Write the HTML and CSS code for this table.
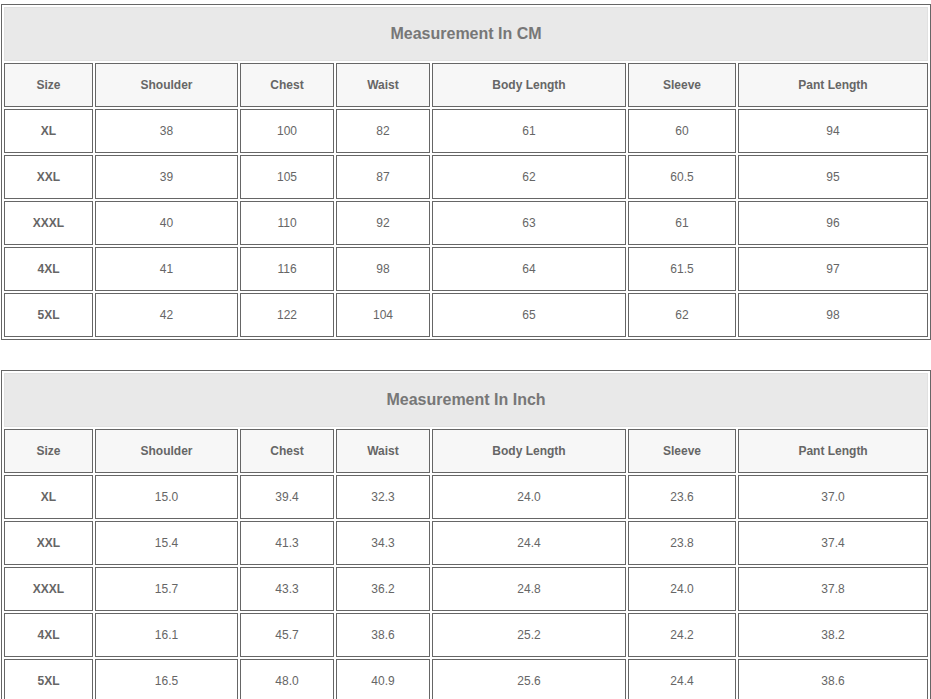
FILE: index.html
```html
<!DOCTYPE html>
<html>
<head>
<meta charset="utf-8">
<link rel="stylesheet" href="styles.css">
</head>
<body>
<div class="page">
<table class="size-table">
  <colgroup><col class="c1"><col class="c2"><col class="c3"><col class="c4"><col class="c5"><col class="c6"><col class="c7"></colgroup>
  <tr><th class="title" colspan="7">Measurement In CM</th></tr>
  <tr class="head">
    <th>Size</th><th>Shoulder</th><th>Chest</th><th>Waist</th><th>Body Length</th><th>Sleeve</th><th>Pant Length</th>
  </tr>
  <tr><td class="sz">XL</td><td>38</td><td>100</td><td>82</td><td>61</td><td>60</td><td>94</td></tr>
  <tr><td class="sz">XXL</td><td>39</td><td>105</td><td>87</td><td>62</td><td>60.5</td><td>95</td></tr>
  <tr><td class="sz">XXXL</td><td>40</td><td>110</td><td>92</td><td>63</td><td>61</td><td>96</td></tr>
  <tr><td class="sz">4XL</td><td>41</td><td>116</td><td>98</td><td>64</td><td>61.5</td><td>97</td></tr>
  <tr><td class="sz">5XL</td><td>42</td><td>122</td><td>104</td><td>65</td><td>62</td><td>98</td></tr>
</table>
<table class="size-table">
  <colgroup><col class="c1"><col class="c2"><col class="c3"><col class="c4"><col class="c5"><col class="c6"><col class="c7"></colgroup>
  <tr><th class="title" colspan="7">Measurement In Inch</th></tr>
  <tr class="head">
    <th>Size</th><th>Shoulder</th><th>Chest</th><th>Waist</th><th>Body Length</th><th>Sleeve</th><th>Pant Length</th>
  </tr>
  <tr><td class="sz">XL</td><td>15.0</td><td>39.4</td><td>32.3</td><td>24.0</td><td>23.6</td><td>37.0</td></tr>
  <tr><td class="sz">XXL</td><td>15.4</td><td>41.3</td><td>34.3</td><td>24.4</td><td>23.8</td><td>37.4</td></tr>
  <tr><td class="sz">XXXL</td><td>15.7</td><td>43.3</td><td>36.2</td><td>24.8</td><td>24.0</td><td>37.8</td></tr>
  <tr><td class="sz">4XL</td><td>16.1</td><td>45.7</td><td>38.6</td><td>25.2</td><td>24.2</td><td>38.2</td></tr>
  <tr><td class="sz">5XL</td><td>16.5</td><td>48.0</td><td>40.9</td><td>25.6</td><td>24.4</td><td>38.6</td></tr>
</table>
</div>
</body>
</html>
```
FILE: styles.css
```css
html, body {
  margin: 0;
  padding: 0;
  background: #ffffff;
}
.page {
  padding: 4px 0 0 1px;
  display: flex;
  flex-direction: column;
  align-items: flex-start;
  gap: 30px;
  font-family: "Liberation Sans", Arial, sans-serif;
}
.size-table {
  width: 930px;
  table-layout: fixed;
  border-collapse: separate;
  border-spacing: 2px;
  border: 1px solid #666666;
  box-sizing: border-box;
  color: #666666;
  font-size: 12px;
}
.size-table th,
.size-table td {
  box-sizing: border-box;
  padding: 0;
  text-align: center;
  vertical-align: middle;
  border: 1px solid #666666;
  height: 44px;
}
.size-table td {
  background: #ffffff;
  font-weight: normal;
}
.size-table .head th {
  background: #f7f7f7;
  font-weight: bold;
}
.size-table th.title {
  height: 54px;
  background: #e9e9e9;
  border: 1px solid #e1e1e1;
  font-size: 16px;
  font-weight: bold;
  color: #777777;
}
.size-table td.sz {
  font-weight: bold;
}
.c1 { width: 89px; }
.c2 { width: 143px; }
.c3 { width: 94px; }
.c4 { width: 94px; }
.c5 { width: 194px; }
.c6 { width: 108px; }
.c7 { width: 190px; }
```
